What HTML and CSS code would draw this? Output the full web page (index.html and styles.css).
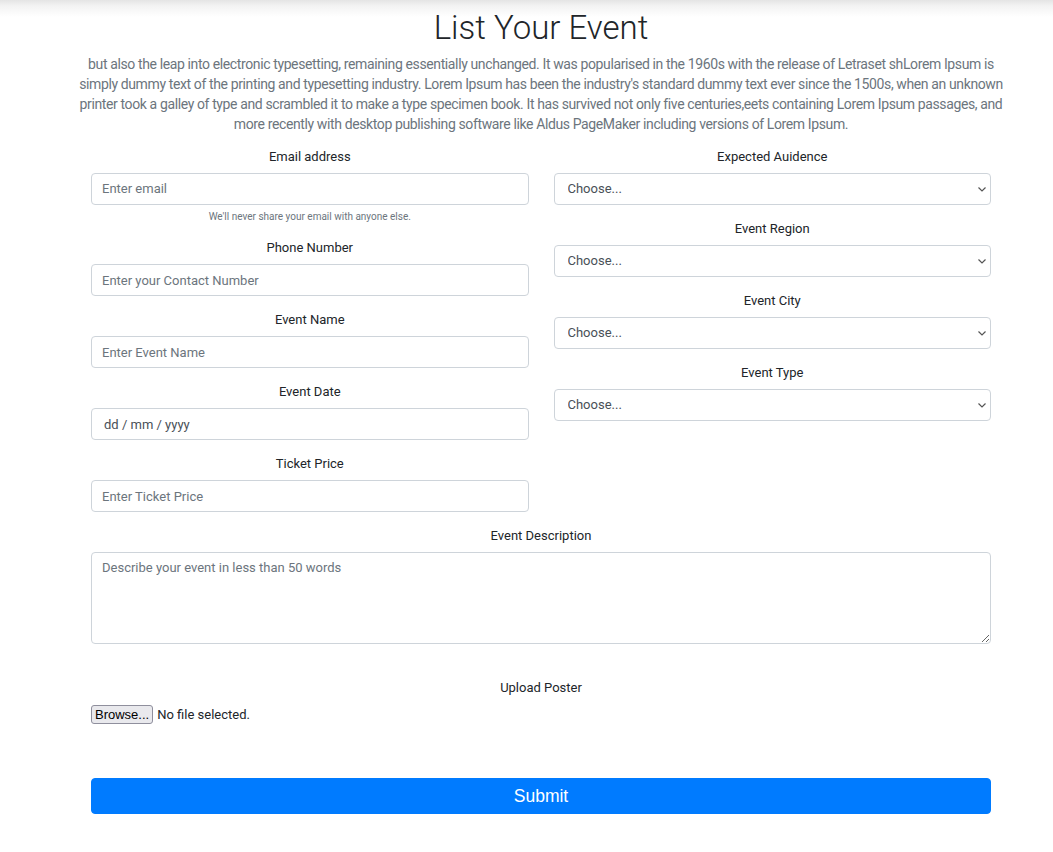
FILE: index.html
```html
<!DOCTYPE html>
<html lang="en">
<head>
<meta charset="utf-8">
<title>List Your Event</title>
<link rel="stylesheet" href="styles.css">
</head>
<body>
<div class="page">
  <h1 class="title">List Your Event</h1>
  <p class="lead">but also the leap into electronic typesetting, remaining essentially unchanged. It was popularised in the 1960s with the release of Letraset shLorem Ipsum is simply dummy text of the printing and typesetting industry. Lorem Ipsum has been the industry's standard dummy text ever since the 1500s, when an unknown printer took a galley of type and scrambled it to make a type specimen book. It has survived not only five centuries,eets containing Lorem Ipsum passages, and more recently with desktop publishing software like Aldus PageMaker including versions of Lorem Ipsum.</p>
  <form class="form">
    <div class="cols">
      <div class="col">
        <div class="group">
          <label class="label" for="email">Email address</label>
          <input class="field" id="email" type="email" placeholder="Enter email">
          <small class="help">We'll never share your email with anyone else.</small>
        </div>
        <div class="group">
          <label class="label" for="phone">Phone Number</label>
          <input class="field" id="phone" type="text" placeholder="Enter your Contact Number">
        </div>
        <div class="group">
          <label class="label" for="ename">Event Name</label>
          <input class="field" id="ename" type="text" placeholder="Enter Event Name">
        </div>
        <div class="group">
          <label class="label" for="edate">Event Date</label>
          <div class="field date">dd / mm / yyyy</div>
        </div>
        <div class="group">
          <label class="label" for="price">Ticket Price</label>
          <input class="field" id="price" type="text" placeholder="Enter Ticket Price">
        </div>
      </div>
      <div class="col">
        <div class="group">
          <label class="label">Expected Auidence</label>
          <div class="select-wrap">
            <select class="field select"><option>Choose...</option></select>
            <svg class="chev" width="8" height="5" viewBox="0 0 8 5"><path d="M0.5 0.5 L4 4 L7.5 0.5" fill="none" stroke="#555" stroke-width="1.2"/></svg>
          </div>
        </div>
        <div class="group">
          <label class="label">Event Region</label>
          <div class="select-wrap">
            <select class="field select"><option>Choose...</option></select>
            <svg class="chev" width="8" height="5" viewBox="0 0 8 5"><path d="M0.5 0.5 L4 4 L7.5 0.5" fill="none" stroke="#555" stroke-width="1.2"/></svg>
          </div>
        </div>
        <div class="group">
          <label class="label">Event City</label>
          <div class="select-wrap">
            <select class="field select"><option>Choose...</option></select>
            <svg class="chev" width="8" height="5" viewBox="0 0 8 5"><path d="M0.5 0.5 L4 4 L7.5 0.5" fill="none" stroke="#555" stroke-width="1.2"/></svg>
          </div>
        </div>
        <div class="group">
          <label class="label">Event Type</label>
          <div class="select-wrap">
            <select class="field select"><option>Choose...</option></select>
            <svg class="chev" width="8" height="5" viewBox="0 0 8 5"><path d="M0.5 0.5 L4 4 L7.5 0.5" fill="none" stroke="#555" stroke-width="1.2"/></svg>
          </div>
        </div>
      </div>
    </div>
    <div class="group">
      <label class="label" for="desc">Event Description</label>
      <textarea class="field area" id="desc" placeholder="Describe your event in less than 50 words"></textarea>
    </div>
    <div class="upload">
      <div class="label">Upload Poster</div>
      <div class="file-row">
        <button type="button" class="browse">Browse...</button>
        <span class="nofile">No file selected.</span>
      </div>
    </div>
    <button type="submit" class="submit">Submit</button>
  </form>
</div>
</body>
</html>
```
FILE: styles.css
```css
* { box-sizing: border-box; }

html, body {
  margin: 0;
  padding: 0;
}

body {
  font-family: Roboto, "Liberation Sans", Arial, sans-serif;
  color: #212529;
  background: #fff linear-gradient(#e4e4e4 0px, #f3f3f3 6px, #ffffff 17px) no-repeat;
  background-size: 100% 17px;
  min-height: 852px;
}

.page {
  width: 930px;
  margin-left: 76px;
  padding-top: 8px;
}

.title {
  margin: 0 0 6px;
  font-size: 33px;
  font-weight: 300;
  line-height: 1.2;
  text-align: center;
  color: #212529;
}

.lead {
  margin: 0;
  font-size: 14px;
  line-height: 20px;
  letter-spacing: -0.38px;
  color: #6c757d;
  text-align: center;
}

.form {
  padding: 13px 15px 0;
}

.cols {
  display: grid;
  grid-template-columns: 1fr 1fr;
  column-gap: 25px;
}

.group {
  display: flex;
  flex-direction: column;
  margin-bottom: 13.67px;
}

.label {
  display: block;
  font-size: 13px;
  line-height: 20px;
  text-align: center;
  color: #212529;
  margin-bottom: 6.33px;
}

.field {
  display: block;
  width: 100%;
  height: 32px;
  padding: 0 10px;
  font-family: Roboto, "Liberation Sans", Arial, sans-serif;
  font-size: 13px;
  color: #495057;
  background: #fff;
  border: 1px solid #ced4da;
  border-radius: 4px;
  outline: none;
}

.field::placeholder {
  color: #6c757d;
  opacity: 1;
}

.date {
  display: flex;
  align-items: center;
  padding-left: 12px;
  color: #495057;
}

.help {
  display: block;
  margin-top: 4.5px;
  font-size: 10px;
  line-height: 15px;
  text-align: center;
  color: #6c757d;
}

.select-wrap {
  position: relative;
}

.select {
  appearance: none;
  -webkit-appearance: none;
  padding-left: 13px;
  color: #495057;
}

.chev {
  position: absolute;
  right: 5px;
  top: 14px;
  pointer-events: none;
}

.area {
  height: 92px;
  padding: 5px 10px;
  line-height: 1.5;
  resize: vertical;
}

.upload {
  margin-top: 34px;
}

.upload .label {
  margin-bottom: 6px;
}

.file-row {
  display: flex;
  align-items: center;
  gap: 4px;
  height: 20px;
}

.browse {
  height: 19px;
  padding: 0 3px;
  font-family: "Liberation Sans", Arial, sans-serif;
  font-size: 13px;
  color: #000;
  background: #e9e9ed;
  border: 1px solid #8f8f9d;
  border-radius: 3px;
}

.nofile {
  font-size: 13px;
  color: #212529;
}

.submit {
  display: block;
  width: 100%;
  height: 36px;
  margin-top: 54px;
  font-family: "Liberation Sans", Arial, sans-serif;
  font-size: 17.5px;
  color: #fff;
  background: #007bff;
  border: 1px solid #007bff;
  border-radius: 4px;
}
```
